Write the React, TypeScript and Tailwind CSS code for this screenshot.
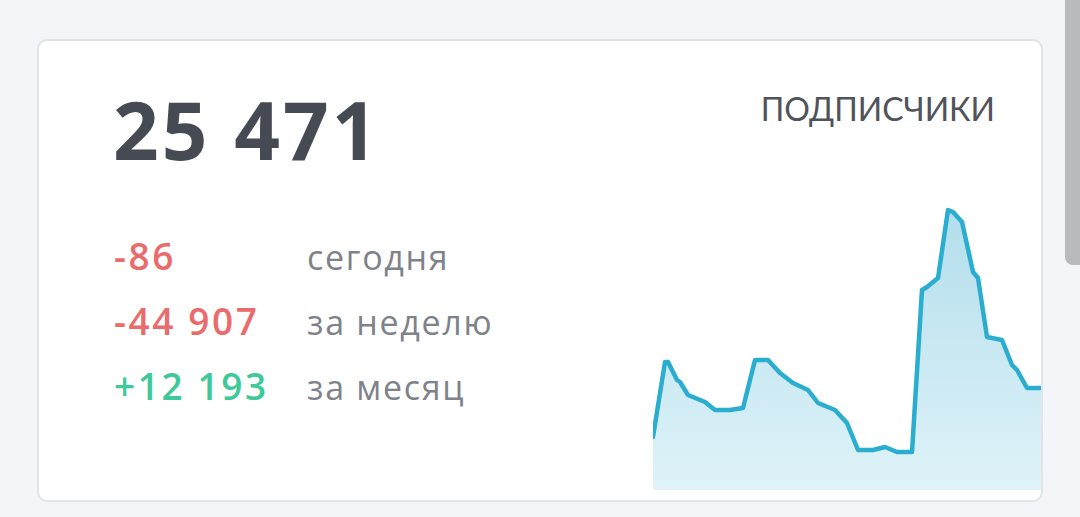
import React from "react";

const points: [number, number][] = [
  [0, 237], [12, 162], [15, 162], [24, 180], [27, 182], [35, 195], [52, 202],
  [62, 210], [77, 210], [90, 208], [102, 160], [115, 160], [127, 173], [140, 183],
  [155, 190], [165, 203], [182, 210], [194, 223], [205, 250], [220, 250], [232, 247],
  [244, 252], [259, 252], [269, 90], [274, 87], [285, 78], [295, 10], [300, 12],
  [309, 22], [320, 72], [325, 78], [334, 137], [349, 140], [359, 165], [364, 170],
  [374, 188], [388, 188],
];

function Sparkline() {
  const W = 388;
  const H = 290;
  const line = points.map(([x, y], i) => `${i === 0 ? "M" : "L"}${x} ${y}`).join(" ");
  const area = `${line} L${W} ${H} L0 ${H} Z`;
  return (
    <svg width={W} height={H} viewBox={`0 0 ${W} ${H}`} className="block overflow-visible">
      <defs>
        <linearGradient id="subsFill" x1="0" y1="0" x2="0" y2="1">
          <stop offset="0%" stopColor="#b3deec" />
          <stop offset="100%" stopColor="#dff3f9" />
        </linearGradient>
        <clipPath id="subsClip">
          <rect x="0" y="-10" width={W} height={H + 10} />
        </clipPath>
      </defs>
      <g clipPath="url(#subsClip)">
        <path d={area} fill="url(#subsFill)" />
        <path
          d={line}
          fill="none"
          stroke="#2badd0"
          strokeWidth={4.5}
          strokeLinejoin="round"
          strokeLinecap="round"
        />
      </g>
    </svg>
  );
}

const rows = [
  { value: "-86", label: "сегодня", color: "text-[#ea6b6b]" },
  { value: "-44 907", label: "за неделю", color: "text-[#ea6b6b]" },
  { value: "+12 193", label: "за месяц", color: "text-[#3fc99a]" },
];

export default function App() {
  return (
    <div
      className="relative min-h-[517px] w-full bg-[#f4f5f8] pt-[39px] pl-[37px]"
      style={{ fontFamily: "'Open Sans', 'Noto Sans', sans-serif" }}
    >
      <div className="flex h-[463px] w-[1006px] rounded-[10px] border-2 border-[#e3e4e8] bg-white">
        <div className="w-[614px] shrink-0 pl-[74px] pt-[48px]">
          <div className="text-[80px] font-bold leading-none tracking-[3px] text-[#464a52]">
            25 471
          </div>
          <div className="ml-px mt-[55px]">
            {rows.map((r) => (
              <div key={r.label} className="flex items-baseline leading-[64px]">
                <div className={`w-[193px] text-[37px] font-semibold tracking-[2.6px] ${r.color}`}>
                  {r.value}
                </div>
                <div className="text-[34px] tracking-[1.7px] text-[#7e828b]">{r.label}</div>
              </div>
            ))}
          </div>
        </div>
        <div className="flex flex-1 flex-col items-end justify-between">
          <div
            className="mr-[47px] pt-[52px] text-[32px] leading-none text-[#50545a]"
            style={{ fontFamily: "Lato, 'Noto Sans', sans-serif" }}
          >
            ПОДПИСЧИКИ
          </div>
          <div className="mb-[10px] mr-px">
            <Sparkline />
          </div>
        </div>
      </div>
      <div className="absolute right-0 top-0 h-[265px] w-[15px] rounded-bl-[8px] bg-[#b9babd]" />
    </div>
  );
}
